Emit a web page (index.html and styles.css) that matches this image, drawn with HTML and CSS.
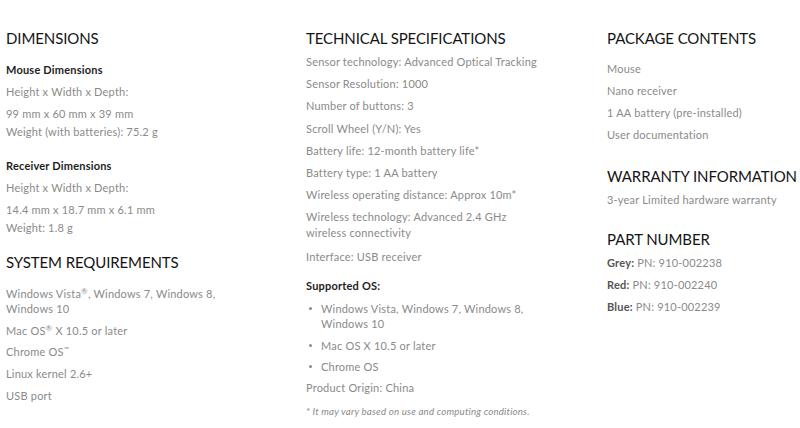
FILE: index.html
```html
<!DOCTYPE html>
<html lang="en">
<head>
<meta charset="utf-8">
<title>Specifications</title>
<link rel="stylesheet" href="styles.css">
</head>
<body>
<div class="specs">
  <section class="col">
    <h2 class="title">DIMENSIONS</h2>
    <h3 class="sub first">Mouse Dimensions</h3>
    <p class="item">Height x Width x Depth:</p>
    <p class="item tall">99 mm x 60 mm x 39 mm<br>Weight (with batteries): 75.2 g</p>
    <h3 class="sub">Receiver Dimensions</h3>
    <p class="item">Height x Width x Depth:</p>
    <p class="item tall">14.4 mm x 18.7 mm x 6.1 mm<br>Weight: 1.8 g</p>
    <h2 class="title sec">SYSTEM REQUIREMENTS</h2>
    <p class="item lead">Windows Vista<sup>®</sup>, Windows 7, Windows 8,<br>Windows 10</p>
    <p class="item">Mac OS<sup>®</sup> X 10.5 or later</p>
    <p class="item">Chrome OS<sup class="tm">™</sup></p>
    <p class="item">Linux kernel 2.6+</p>
    <p class="item">USB port</p>
  </section>
  <section class="col mid">
    <h2 class="title">TECHNICAL SPECIFICATIONS</h2>
    <p class="item near">Sensor technology: Advanced Optical Tracking</p>
    <p class="item">Sensor Resolution: 1000</p>
    <p class="item">Number of buttons: 3</p>
    <p class="item">Scroll Wheel (Y/N): Yes</p>
    <p class="item">Battery life: 12-month battery life*</p>
    <p class="item">Battery type: 1 AA battery</p>
    <p class="item">Wireless operating distance: Approx 10m*</p>
    <p class="item wrap">Wireless technology: Advanced 2.4 GHz<br>wireless connectivity</p>
    <p class="item">Interface: USB receiver</p>
    <h3 class="sub os">Supported OS:</h3>
    <ul class="bullets">
      <li>Windows Vista, Windows 7, Windows 8,<br>Windows 10</li>
      <li>Mac OS X 10.5 or later</li>
      <li>Chrome OS</li>
    </ul>
    <p class="item">Product Origin: China</p>
    <p class="note">* It may vary based on use and computing conditions.</p>
  </section>
  <section class="col">
    <h2 class="title">PACKAGE CONTENTS</h2>
    <p class="item lead">Mouse</p>
    <p class="item">Nano receiver</p>
    <p class="item">1 AA battery (pre-installed)</p>
    <p class="item">User documentation</p>
    <h2 class="title warranty">WARRANTY INFORMATION</h2>
    <p class="item near">3-year Limited hardware warranty</p>
    <h2 class="title part">PART NUMBER</h2>
    <p class="item near"><b>Grey:</b> PN: 910-002238</p>
    <p class="item"><b>Red:</b> PN: 910-002240</p>
    <p class="item"><b>Blue:</b> PN: 910-002239</p>
  </section>
</div>
</body>
</html>
```

FILE: styles.css
```css
html, body {
  margin: 0;
  padding: 0;
  background: #ffffff;
}

body {
  font-family: Lato, "Open Sans", sans-serif;
  color: #8a8a8a;
  width: 800px;
  height: 428px;
  overflow: hidden;
}

.specs {
  display: grid;
  grid-template-columns: 300px 301px 1fr;
  padding: 28px 0 0 6px;
}

.col {
  display: flex;
  flex-direction: column;
  align-items: flex-start;
}

.title {
  margin: 0;
  font-size: 15px;
  line-height: 20px;
  font-weight: 400;
  color: #141414;
  letter-spacing: -0.1px;
  white-space: nowrap;
}

.title.sec {
  margin-top: 15px;
}

.title.warranty {
  margin-top: 24px;
}

.title.part {
  margin-top: 22px;
}

.sub {
  margin: 17px 0 0;
  font-size: 11px;
  line-height: 16px;
  font-weight: 700;
  color: #1e1e1e;
  letter-spacing: 0.2px;
}

.sub.first {
  margin-top: 14px;
}

.sub.os {
  margin-top: 14px;
}

.item {
  margin: 7px 0 0;
  font-size: 11px;
  line-height: 15px;
  letter-spacing: 0.2px;
}

.mid .item {
  margin-top: 7.2px;
}

.sub + .item {
  margin-top: 6px;
}

.item.tall {
  line-height: 18px;
  margin-top: 6px;
}

.item.lead {
  margin-top: 13px;
}

.title.sec + .item.lead {
  margin-top: 14px;
}

.title.sec ~ .item:not(.lead) {
  margin-top: 6.7px;
}

.mid .item.near,
.item.near {
  margin-top: 6px;
}

.item.wrap {
  line-height: 16px;
}

.item b {
  font-weight: 700;
  color: #555555;
}

sup {
  font-size: 8px;
  line-height: 0;
  vertical-align: 4px;
}

sup.tm {
  font-size: 7px;
}

.bullets {
  list-style: none;
  margin: 7px 0 0;
  padding: 0;
}

.bullets li {
  position: relative;
  margin: 0 0 7px;
  padding-left: 15px;
  font-size: 11px;
  line-height: 15px;
  letter-spacing: 0.2px;
}

.bullets li:nth-child(2) {
  margin-bottom: 6.5px;
}

.bullets li:last-child {
  margin-bottom: 6px;
}

.bullets li::before {
  content: "";
  position: absolute;
  left: 3px;
  top: 6px;
  width: 3px;
  height: 3px;
  border-radius: 50%;
  background: #8a8a8a;
}

.mid .bullets + .item {
  margin-top: 0;
}

.note {
  margin: 8.5px 0 0;
  font-size: 9.7px;
  line-height: 14px;
  font-style: italic;
  letter-spacing: 0.2px;
}
```
